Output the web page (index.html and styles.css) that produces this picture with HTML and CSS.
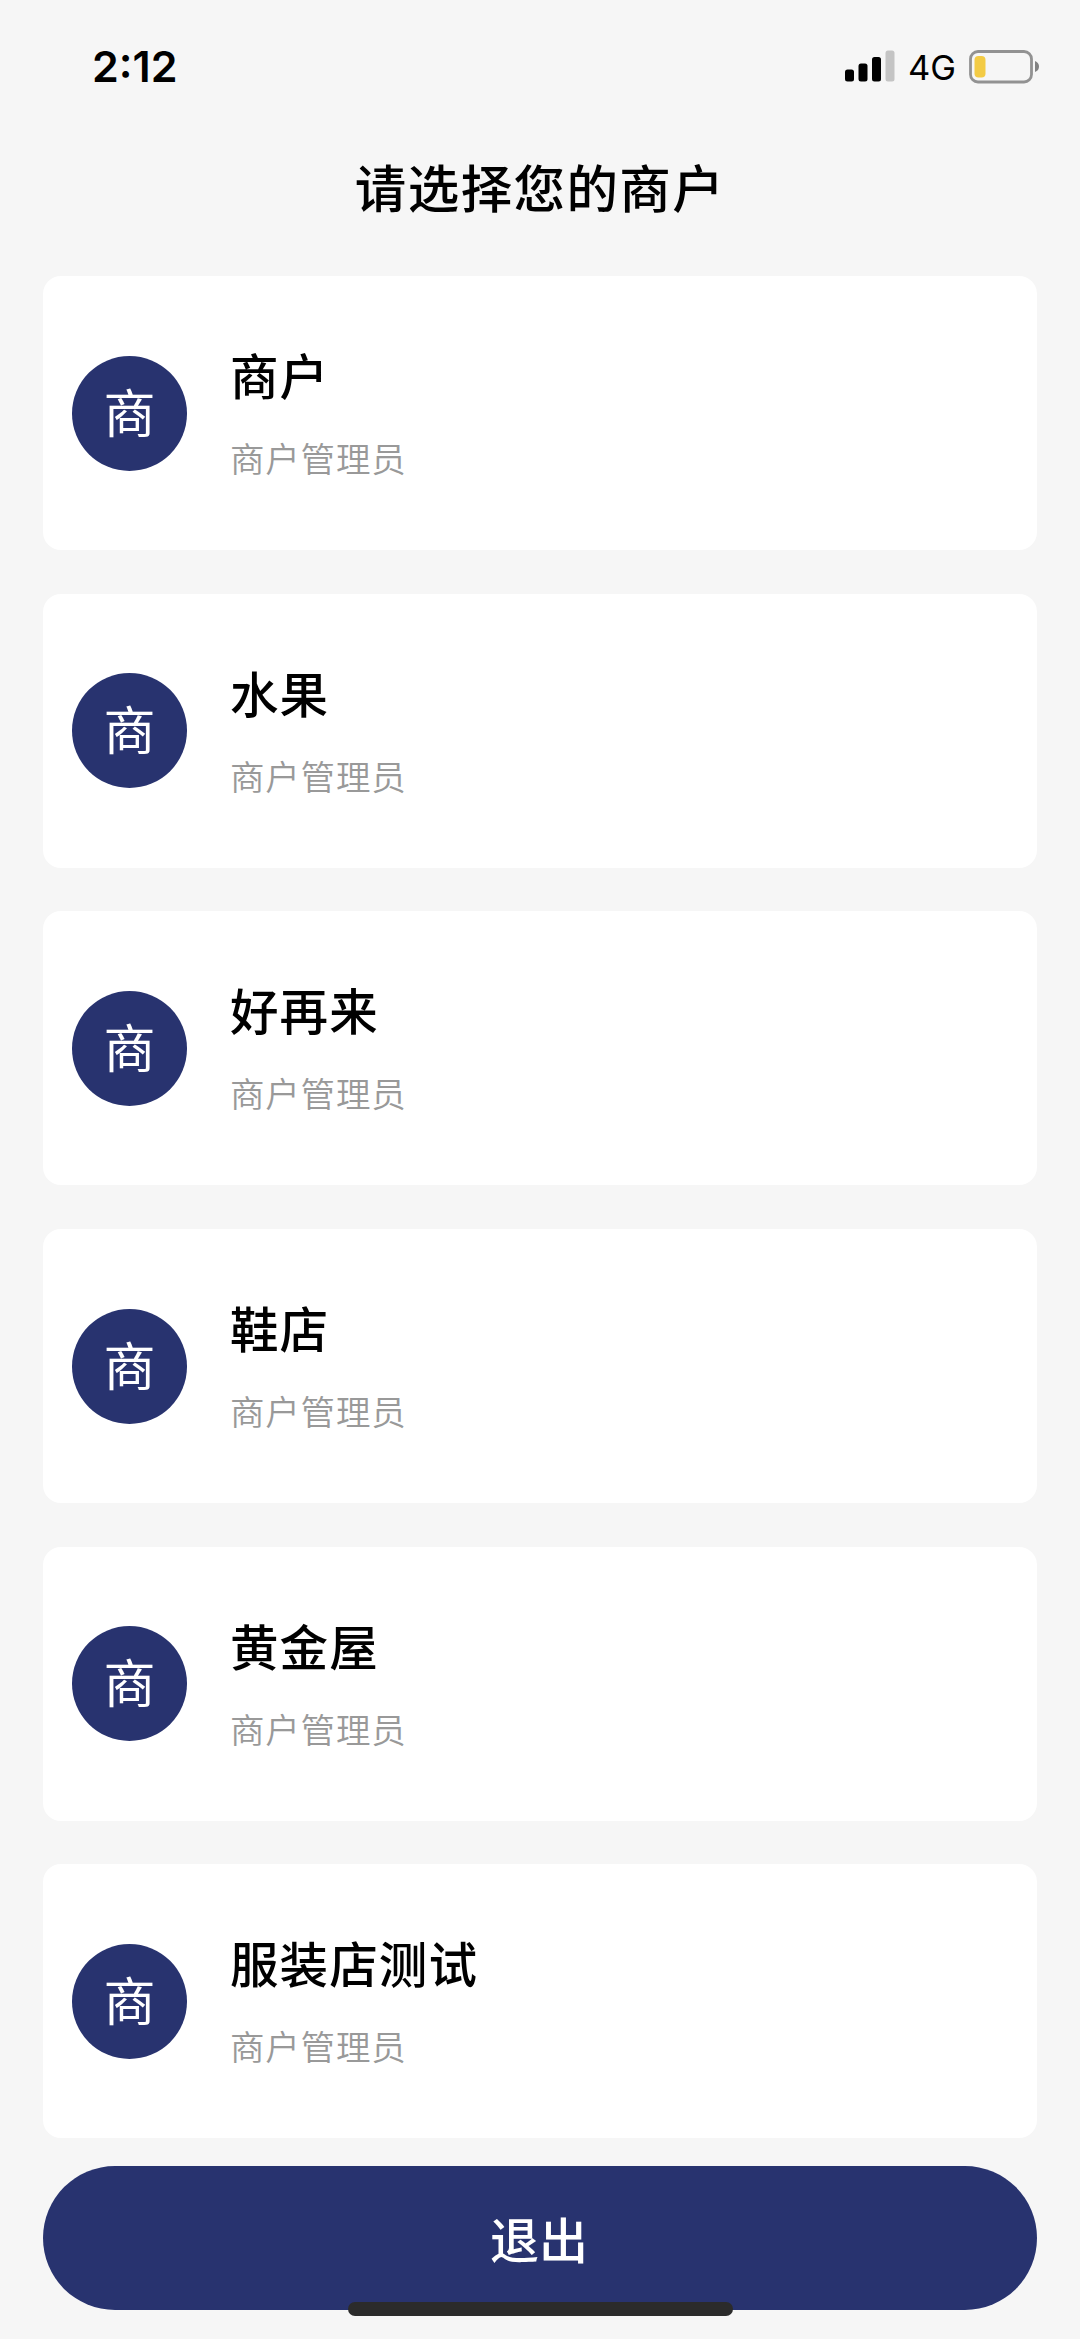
FILE: index.html
```html
<!DOCTYPE html>
<html lang="zh-CN">
<head>
    <meta charset="utf-8">
    <title>请选择您的商户</title>
    <link rel="stylesheet" href="styles.css">
</head>
<body>
    <div class="page">
        <div class="status-bar">
            <div class="time">2:12</div>
            <div class="status-icons">
                <svg class="signal" width="50" height="32" viewBox="0 0 50 32">
                    <rect x="0" y="19.5" width="9" height="12" rx="2.5" fill="#000"/>
                    <rect x="13.5" y="13.5" width="9" height="18" rx="2.5" fill="#000"/>
                    <rect x="27" y="7" width="9" height="24.5" rx="2.5" fill="#000"/>
                    <rect x="40.5" y="0.5" width="9" height="31" rx="2.5" fill="#c4c4c4"/>
                </svg>
                <span class="network">4G</span>
                <svg class="battery" width="72" height="34" viewBox="0 0 72 34">
                    <rect x="1.5" y="1.5" width="61" height="30.5" rx="7.5" fill="none" stroke="#929292" stroke-width="2.8"/>
                    <rect x="5.5" y="6" width="11" height="21.5" rx="4" fill="#f3cb45"/>
                    <path d="M66 11 Q70 12.5 70 16.5 Q70 20.500 66 22 Z" fill="#828282"/>
                </svg>
            </div>
        </div>

        <h1 class="title">请选择您的商户</h1>

        <div class="shop-list">
            <div class="shop">
                <div class="avatar">商</div>
                <div class="shop-info">
                    <div class="shop-name">商户</div>
                    <div class="shop-role">商户管理员</div>
                </div>
            </div>
            <div class="shop">
                <div class="avatar">商</div>
                <div class="shop-info">
                    <div class="shop-name">水果</div>
                    <div class="shop-role">商户管理员</div>
                </div>
            </div>
            <div class="shop">
                <div class="avatar">商</div>
                <div class="shop-info">
                    <div class="shop-name">好再来</div>
                    <div class="shop-role">商户管理员</div>
                </div>
            </div>
            <div class="shop">
                <div class="avatar">商</div>
                <div class="shop-info">
                    <div class="shop-name">鞋店</div>
                    <div class="shop-role">商户管理员</div>
                </div>
            </div>
            <div class="shop">
                <div class="avatar">商</div>
                <div class="shop-info">
                    <div class="shop-name">黄金屋</div>
                    <div class="shop-role">商户管理员</div>
                </div>
            </div>
            <div class="shop">
                <div class="avatar">商</div>
                <div class="shop-info">
                    <div class="shop-name">服装店测试</div>
                    <div class="shop-role">商户管理员</div>
                </div>
            </div>
        </div>

        <button class="logout">退出</button>
        <div class="home-indicator"></div>
    </div>
</body>
</html>
```
FILE: styles.css
```css
* {
    box-sizing: border-box;
}

body {
    margin: 0;
    background-color: #f6f6f6;
    color: #000;
    font-family: Inter, "Noto Sans CJK SC", sans-serif;
}

.page {
    position: relative;
    width: 1080px;
    height: 2339px;
    padding: 0 43px;
    overflow: hidden;
}

/* status bar */
.status-bar {
    display: flex;
    justify-content: space-between;
    height: 132px;
    margin-right: -4px;
    padding: 50px 0 0 49px;
}

.time {
    font-size: 43px;
    font-weight: 600;
    line-height: 32px;
}

.status-icons {
    display: flex;
    align-items: flex-start;
    height: 34px;
}

.network {
    margin: 0 13px 0 13px;
    font-size: 34.5px;
    font-weight: 400;
    line-height: 35px;
}

.title {
    height: 144px;
    margin: 0;
    font-size: 51.5px;
    font-weight: 500;
    line-height: 114px;
    letter-spacing: 1.4px;
    text-align: center;
}

/* merchant cards */
.shop-list {
    display: flex;
    flex-direction: column;
    gap: 43.7px;
}

.shop {
    display: flex;
    align-items: center;
    height: 274px;
    padding-left: 29px;
    background-color: #fff;
    border-radius: 18px;
}

.avatar {
    width: 115px;
    height: 115px;
    border-radius: 50%;
    background-color: #28336f;
    color: #fff;
    font-size: 52px;
    line-height: 117px;
    text-align: center;
}

.shop-info {
    margin-left: 43px;
}

.shop-name {
    font-size: 48.5px;
    font-weight: 500;
    line-height: 72px;
    letter-spacing: 1.1px;
}

.shop-role {
    margin-top: 22px;
    color: #999;
    font-size: 34.5px;
    font-weight: 350;
    line-height: 48px;
    letter-spacing: 0.8px;
}

.logout {
    display: block;
    width: 994px;
    height: 144px;
    margin-top: 28px;
    padding: 0 2px 2px 0;
    border: none;
    border-radius: 72px;
    background-color: #28336f;
    color: #fff;
    font-family: inherit;
    font-size: 49px;
    font-weight: 500;
}

/* sits over the logout button */
.home-indicator {
    position: absolute;
    left: 348px;
    bottom: 23px;
    width: 385px;
    height: 14px;
    border-radius: 7px;
    background-color: #2b2b2b;
}
```
